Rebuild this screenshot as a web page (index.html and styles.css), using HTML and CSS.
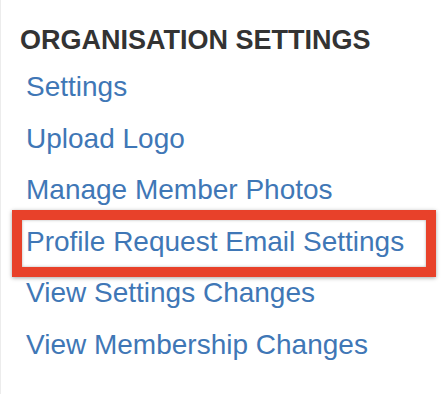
FILE: index.html
```html
<!DOCTYPE html>
<html>
<head>
<meta charset="utf-8">
<link rel="stylesheet" href="styles.css">
</head>
<body>
<div class="panel">
  <h2 class="heading">ORGANISATION SETTINGS</h2>
  <ul class="links">
    <li class="item"><a href="#">Settings</a></li>
    <li class="item"><a href="#">Upload Logo</a></li>
    <li class="item"><a href="#">Manage Member Photos</a></li>
    <li class="item highlight"><a href="#">Profile Request Email Settings</a></li>
    <li class="item"><a href="#">View Settings Changes</a></li>
    <li class="item"><a href="#">View Membership Changes</a></li>
  </ul>
</div>
</body>
</html>
```
FILE: styles.css
```css
html, body {
  margin: 0;
  padding: 0;
  background: #fff;
}
.panel {
  height: 394px;
  box-sizing: border-box;
  border-left: 1px solid #ececec;
  padding: 24px 0 0 19px;
  font-family: "Liberation Sans", Arial, sans-serif;
}
.heading {
  margin: 0;
  font-size: 27px;
  line-height: 32px;
  font-weight: 700;
  color: #333;
}
.links {
  list-style: none;
  margin: 5px 0 0;
  padding: 0 0 0 6px;
}
.item {
  font-size: 28px;
  line-height: 51.6px;
  height: 51.6px;
}
.item a {
  color: #3f77b6;
  text-decoration: none;
}
.highlight {
  position: relative;
}
.highlight::after {
  content: "";
  position: absolute;
  left: -14px;
  top: -6px;
  width: 424px;
  height: 67px;
  box-sizing: border-box;
  border: 10px solid #e8412a;
  box-shadow: 0 1px 4px rgba(0,0,0,0.35), inset 0 0 3px rgba(0,0,0,0.3);
}
```
